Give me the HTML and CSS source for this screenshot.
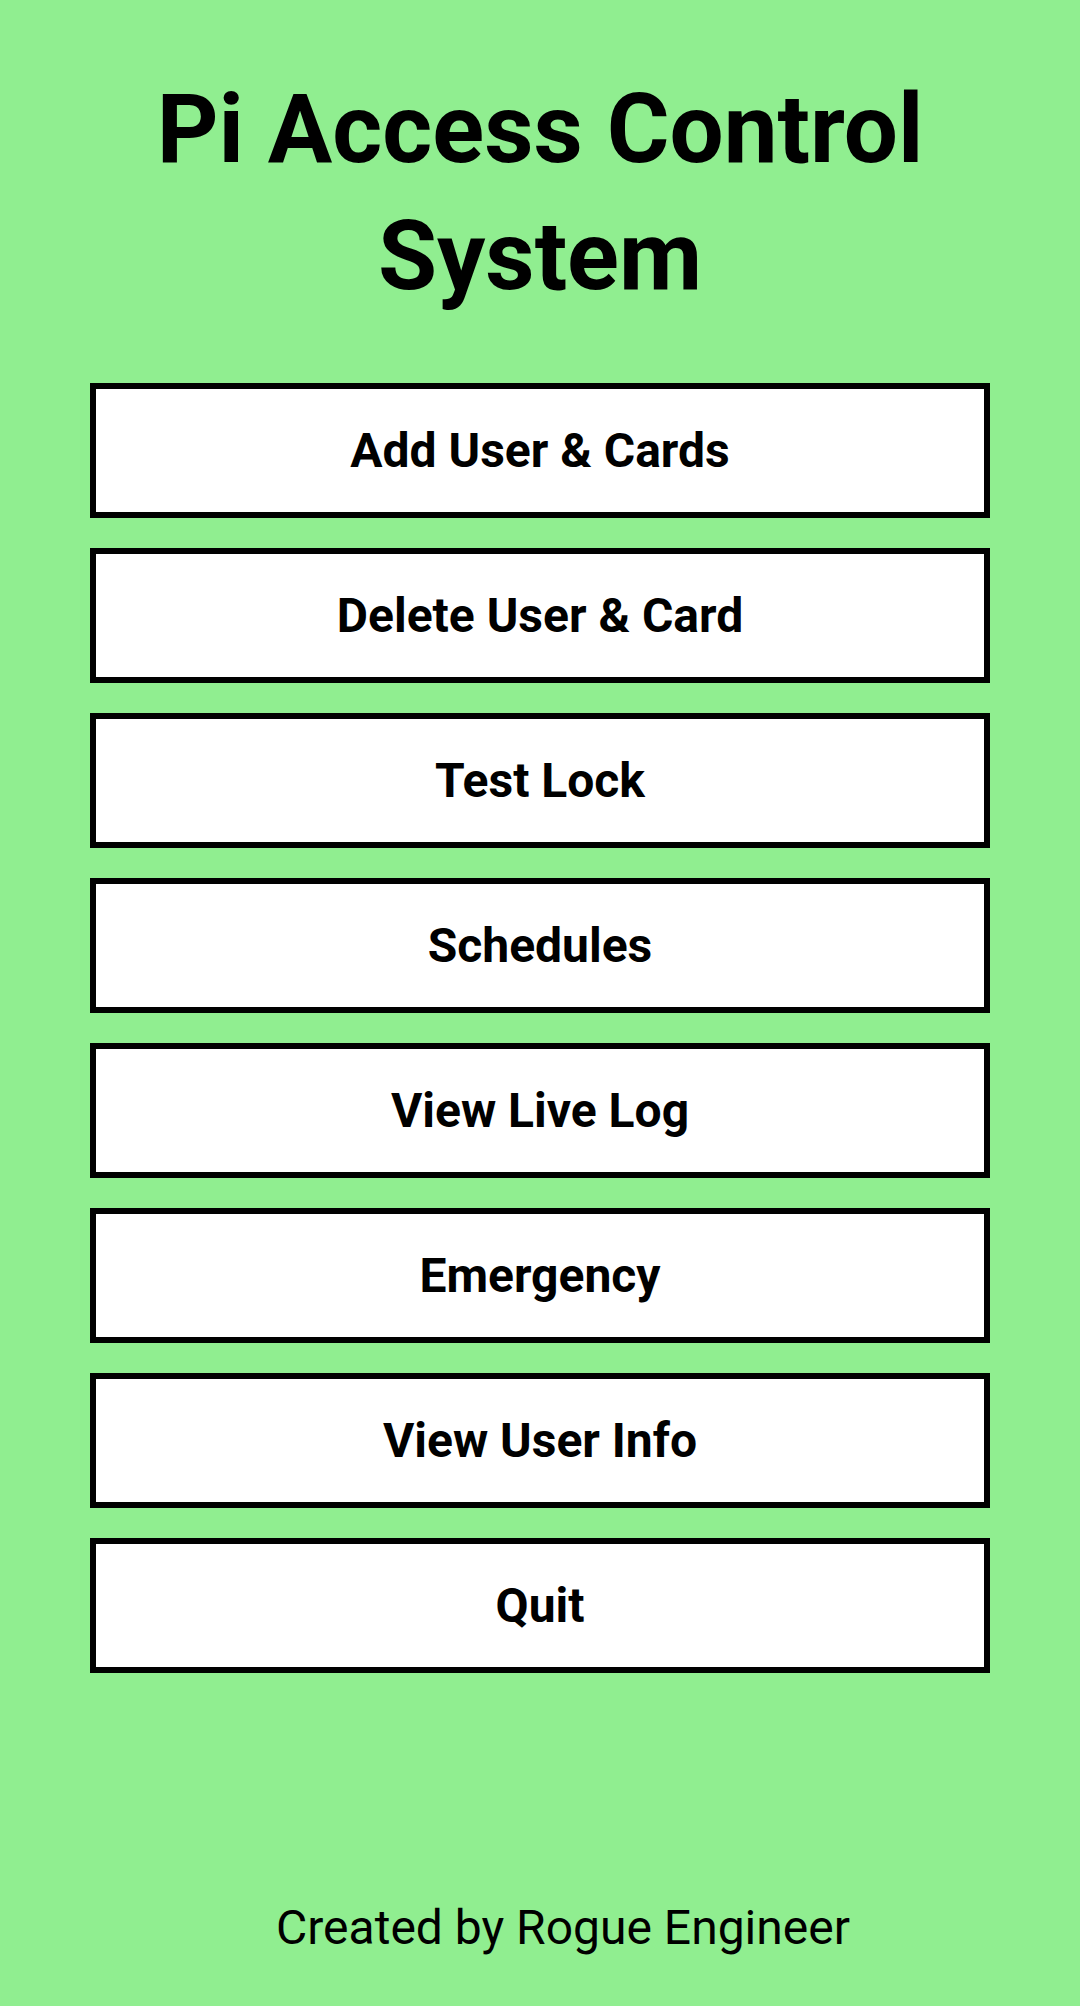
FILE: index.html
```html
<!DOCTYPE html>
<html lang="en">
<head>
<meta charset="utf-8">
<title>Pi Access Control System</title>
<link rel="stylesheet" href="styles.css">
</head>
<body>
<main class="screen">
  <h1 class="title">Pi Access Control<br>System</h1>
  <nav class="menu">
    <button class="menu-btn">Add User &amp; Cards</button>
    <button class="menu-btn">Delete User &amp; Card</button>
    <button class="menu-btn">Test Lock</button>
    <button class="menu-btn">Schedules</button>
    <button class="menu-btn">View Live Log</button>
    <button class="menu-btn">Emergency</button>
    <button class="menu-btn">View User Info</button>
    <button class="menu-btn">Quit</button>
  </nav>
  <footer class="credit">Created by Rogue Engineer</footer>
</main>
</body>
</html>
```

FILE: styles.css
```css
html, body {
  margin: 0;
  padding: 0;
  background: #90ee90;
}

.screen {
  width: 1080px;
  height: 2006px;
  display: flex;
  flex-direction: column;
  align-items: center;
  font-family: Roboto, "Liberation Sans", sans-serif;
  color: #000;
}

.title {
  margin: 66px 0 0 0;
  font-size: 96px;
  line-height: 127px;
  font-weight: 700;
  text-align: center;
}

.menu {
  margin-top: 63px;
  display: flex;
  flex-direction: column;
  gap: 30px;
}

.menu-btn {
  box-sizing: border-box;
  width: 900px;
  height: 135px;
  border: 6px solid #000;
  border-radius: 0;
  background: #fff;
  color: #000;
  font-family: Roboto, "Liberation Sans", sans-serif;
  font-size: 48px;
  font-weight: 700;
  padding: 0;
  margin: 0;
}

.credit {
  margin-top: 227px;
  margin-left: 46px;
  font-size: 48px;
  font-weight: 400;
  line-height: 56px;
}
```
